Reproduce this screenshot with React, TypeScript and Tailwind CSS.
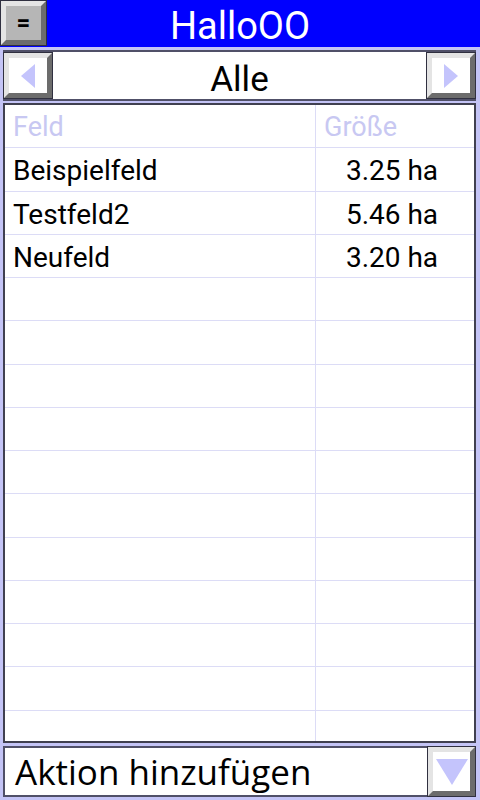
import * as React from "react";

const ROWS: { name: string; size: string }[] = [
  { name: "Beispielfeld", size: "3.25 ha" },
  { name: "Testfeld2", size: "5.46 ha" },
  { name: "Neufeld", size: "3.20 ha" },
];

const EMPTY_ROWS = 11;

function BevelButton({
  children,
  face = "bg-white",
  className = "",
}: {
  children: React.ReactNode;
  face?: string;
  className?: string;
}) {
  return (
    <div className={`border border-[#303040] ${className}`}>
      <div
        className={`h-full w-full border-[5px] border-t-[#e4e4e4] border-l-[#e4e4e4] border-b-[#6c6c6c] border-r-[#6c6c6c] flex items-center justify-center ${face}`}
      >
        {children}
      </div>
    </div>
  );
}

export default function App() {
  return (
    <div
      className="w-[480px] h-[800px] bg-[#c4c4f6] flex flex-col overflow-hidden"
      style={{ fontFamily: "Roboto, 'Noto Sans', sans-serif" }}
    >
      {/* Title bar */}
      <div className="h-[47px] shrink-0 bg-[#0000ff] grid grid-cols-[47px_1fr_47px]">
        <BevelButton face="bg-[#b6b6b6]" className="h-[46px] w-[47px]">
          <span className="text-[24px] font-bold leading-none text-black">=</span>
        </BevelButton>
        <div className="flex items-center justify-center pt-[5px] text-white text-[38px] leading-none">
          HalloOO
        </div>
        <div />
      </div>

      {/* Filter bar */}
      <div className="mt-[3px] ml-[3px] mr-[4px] h-[51px] shrink-0 flex bg-white border-y-2 border-[#505068]">
        <BevelButton className="h-full w-[50px]">
          <svg width="14" height="24" viewBox="0 0 14 24">
            <polygon points="14,0 14,24 0,12" fill="#c4c4fc" />
          </svg>
        </BevelButton>
        <div className="flex-1 flex items-center justify-center pt-[8px] text-[35px] leading-none text-black">
          Alle
        </div>
        <BevelButton className="h-full w-[50px]">
          <svg width="14" height="24" viewBox="0 0 14 24">
            <polygon points="0,0 0,24 14,12" fill="#c4c4fc" />
          </svg>
        </BevelButton>
      </div>

      {/* Table */}
      <div className="mt-[2px] ml-[3px] mr-[4px] flex-1 min-h-0 bg-white border-2 border-[#404050] overflow-hidden">
        <div className="grid grid-cols-[311px_1fr] h-[43.25px] border-b border-[#dcdcf6]">
          <div className="border-r border-[#dcdcf6] pl-[8px] pt-[2px] flex items-center text-[27px] text-[#c8c8f2]">
            Feld
          </div>
          <div className="pl-[8px] pt-[2px] flex items-center text-[27px] text-[#c8c8f2]">
            Größe
          </div>
        </div>
        {ROWS.map((row) => (
          <div
            key={row.name}
            className="grid grid-cols-[311px_1fr] h-[43.25px] border-b border-[#dcdcf6]"
          >
            <div className="border-r border-[#dcdcf6] pl-[8px] pt-[2px] flex items-center text-[28px] text-black">
              {row.name}
            </div>
            <div className="flex items-center justify-center pr-[6px] pt-[2px] text-[28px] text-black">
              {row.size}
            </div>
          </div>
        ))}
        {Array.from({ length: EMPTY_ROWS }).map((_, i) => (
          <div
            key={i}
            className="grid grid-cols-[311px_1fr] h-[43.25px] border-b border-[#dcdcf6]"
          >
            <div className="border-r border-[#dcdcf6]" />
            <div />
          </div>
        ))}
      </div>

      {/* Action bar */}
      <div className="mt-[3px] mb-[3px] ml-[3px] mr-[4px] h-[51px] shrink-0 flex bg-white border-2 border-r-0 border-[#505068]">
        <div
          className="flex-1 flex items-center pl-[10px] text-[35px] leading-none text-black"
          style={{ fontFamily: "'Open Sans', 'Noto Sans', sans-serif" }}
        >
          Aktion hinzufügen
        </div>
        <BevelButton className="-my-[2px] h-[51px] w-[49px]">
          <svg width="32" height="26" viewBox="0 0 32 26">
            <polygon points="0,0 32,0 16,26" fill="#c4c4fc" />
          </svg>
        </BevelButton>
      </div>
    </div>
  );
}
